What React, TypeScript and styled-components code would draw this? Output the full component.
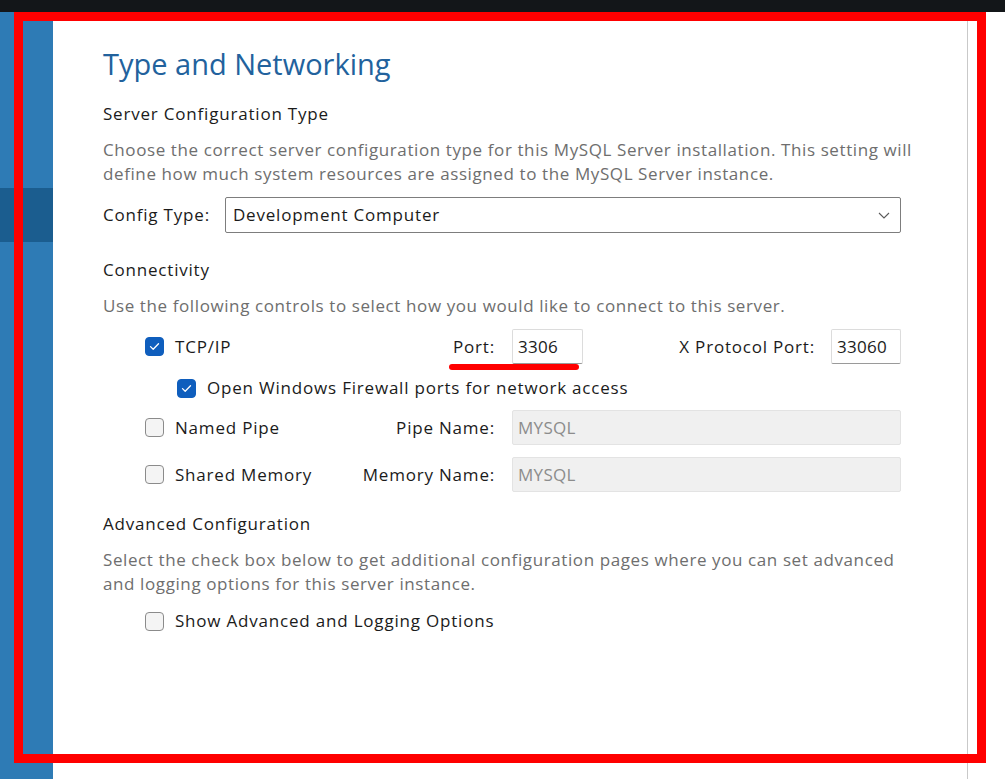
import React from 'react';
import styled, { createGlobalStyle } from 'styled-components';

const GlobalStyle = createGlobalStyle`
  html, body {
    margin: 0;
    padding: 0;
    background: #ffffff;
  }

  body {
    font-family: 'Open Sans', 'Noto Sans', 'DejaVu Sans', sans-serif;
    color: #1b1b1b;
  }
`;

const Screen = styled.div`
  position: relative;
  width: 1005px;
  height: 779px;
  display: flex;
  flex-direction: column;
  overflow: hidden;
  background: #ffffff;
`;

const TopBar = styled.div`
  height: 12px;
  flex: none;
  background: #131619;
`;

const Body = styled.div`
  flex: 1;
  display: flex;
  min-height: 0;
`;

const Sidebar = styled.div`
  width: 53px;
  flex: none;
  background: #2e7bb5;
  padding-top: 176px;
`;

const SidebarItem = styled.div<{ $active?: boolean }>`
  height: 54px;
  background: ${({ $active }) => ($active ? '#1b5d8f' : 'transparent')};
`;

const Panel = styled.main`
  width: 915px;
  flex: none;
  box-sizing: border-box;
  border-right: 1px solid #c9c9c9;
  padding: 32px 66px 0 50px;
  font-size: 17px;
  letter-spacing: 0.8px;
  line-height: 24px;
`;

const Title = styled.h1`
  margin: 0;
  font-size: 29px;
  font-weight: 400;
  line-height: 40px;
  letter-spacing: 0;
  color: #22629d;
`;

const SectionTitle = styled.h2<{ $top: number }>`
  margin: ${({ $top }) => $top}px 0 0;
  font-size: 17px;
  font-weight: 400;
  line-height: 24px;
  color: #1b1b1b;
`;

const Description = styled.p`
  margin: 12px 0 0;
  color: #6e6e6e;
  letter-spacing: 0.6px;
  white-space: nowrap;
`;

const ConfigRow = styled.div`
  margin-top: 11px;
  display: flex;
  align-items: center;
  gap: 15px;
`;

const Select = styled.div`
  flex: 1;
  height: 36px;
  box-sizing: border-box;
  border: 1px solid #7d7d7d;
  border-radius: 2px;
  display: flex;
  align-items: center;
  justify-content: space-between;
  padding: 0 10px 0 7px;
  color: #1b1b1b;
`;

const OptionRow = styled.div<{ $top: number; $indent?: number }>`
  margin-top: ${({ $top }) => $top}px;
  padding-left: ${({ $indent }) => 42 + ($indent || 0)}px;
  display: grid;
  grid-template-columns: ${({ $indent }) => ($indent !== undefined ? '1fr' : '183px 150px 1fr')};
  column-gap: 17px;
  align-items: center;
`;

const CheckLabel = styled.label`
  display: flex;
  align-items: center;
  gap: 11px;
  white-space: nowrap;
`;

const Box = styled.span<{ $checked?: boolean }>`
  width: 19px;
  height: 19px;
  flex: none;
  box-sizing: border-box;
  border-radius: 4px;
  display: inline-flex;
  align-items: center;
  justify-content: center;
  background: ${({ $checked }) => ($checked ? '#0f5ebd' : '#f4f4f4')};
  border: 1px solid ${({ $checked }) => ($checked ? '#0f5ebd' : '#8b8b8b')};
`;

const FieldLabel = styled.span`
  text-align: right;
  white-space: nowrap;
`;

const FieldGroup = styled.div`
  display: flex;
  align-items: center;
`;

const TextField = styled.div<{ $width?: number; $disabled?: boolean }>`
  ${({ $width }) => ($width ? `width: ${$width}px;` : 'flex: 1;')}
  height: 35px;
  box-sizing: border-box;
  display: flex;
  align-items: center;
  padding: 0 5px;
  letter-spacing: 0.3px;
  border: 1px solid ${({ $disabled }) => ($disabled ? '#e3e3e3' : '#dcdcdc')};
  border-bottom-color: ${({ $disabled }) => ($disabled ? '#e3e3e3' : '#9a9a9a')};
  border-radius: 2px;
  background: ${({ $disabled }) => ($disabled ? '#f0f0f0' : '#ffffff')};
  color: ${({ $disabled }) => ($disabled ? '#8c8c8c' : '#1b1b1b')};
`;

const ProtocolLabel = styled.span`
  margin-left: auto;
  margin-right: 16px;
  white-space: nowrap;
`;

const Frame = styled.div`
  position: absolute;
  left: 14px;
  top: 12px;
  width: 972px;
  height: 751px;
  box-sizing: border-box;
  border: 9px solid #ff0000;
  pointer-events: none;
`;

const Underline = styled.div`
  position: absolute;
  left: 449px;
  top: 364px;
  width: 130px;
  height: 6px;
  border-radius: 3px;
  background: #ff0000;
  pointer-events: none;
`;

const Check = ({ checked }: { checked?: boolean }) => (
  <Box $checked={checked}>
    {checked && (
      <svg width='11' height='9' viewBox='0 0 11 9' fill='none'>
        <path d='M1.5 4.6 L4.2 7.2 L9.5 1.8' stroke='#ffffff' strokeWidth='1.3' strokeLinecap='round' strokeLinejoin='round' />
      </svg>
    )}
  </Box>
);

const Chevron = () => (
  <svg width='12' height='7' viewBox='0 0 12 7' fill='none'>
    <path d='M1 1 L6 6 L11 1' stroke='#5a5a5a' strokeWidth='1.1' />
  </svg>
);

export default function App () {
  return (
    <Screen>
      <GlobalStyle />
      <TopBar />
      <Body>
        <Sidebar>
          <SidebarItem $active />
        </Sidebar>
        <Panel>
          <Title>Type and Networking</Title>

          <SectionTitle $top={18}>Server Configuration Type</SectionTitle>
          <Description>
            Choose the correct server configuration type for this MySQL Server installation. This setting will<br />
            define how much system resources are assigned to the MySQL Server instance.
          </Description>
          <ConfigRow>
            <span>Config Type:</span>
            <Select>
              <span>Development Computer</span>
              <Chevron />
            </Select>
          </ConfigRow>

          <SectionTitle $top={25}>Connectivity</SectionTitle>
          <Description>Use the following controls to select how you would like to connect to this server.</Description>

          <OptionRow $top={11}>
            <CheckLabel><Check checked />TCP/IP</CheckLabel>
            <FieldLabel>Port:</FieldLabel>
            <FieldGroup>
              <TextField $width={71}>3306</TextField>
              <ProtocolLabel>X Protocol Port:</ProtocolLabel>
              <TextField $width={70}>33060</TextField>
            </FieldGroup>
          </OptionRow>
          <OptionRow $top={12} $indent={32}>
            <CheckLabel><Check checked />Open Windows Firewall ports for network access</CheckLabel>
          </OptionRow>
          <OptionRow $top={10}>
            <CheckLabel><Check />Named Pipe</CheckLabel>
            <FieldLabel>Pipe Name:</FieldLabel>
            <TextField $disabled>MYSQL</TextField>
          </OptionRow>
          <OptionRow $top={12}>
            <CheckLabel><Check />Shared Memory</CheckLabel>
            <FieldLabel>Memory Name:</FieldLabel>
            <TextField $disabled>MYSQL</TextField>
          </OptionRow>

          <SectionTitle $top={20}>Advanced Configuration</SectionTitle>
          <Description>
            Select the check box below to get additional configuration pages where you can set advanced<br />
            and logging options for this server instance.
          </Description>
          <OptionRow $top={13} $indent={0}>
            <CheckLabel><Check />Show Advanced and Logging Options</CheckLabel>
          </OptionRow>
        </Panel>
      </Body>
      <Frame />
      <Underline />
    </Screen>
  );
}
